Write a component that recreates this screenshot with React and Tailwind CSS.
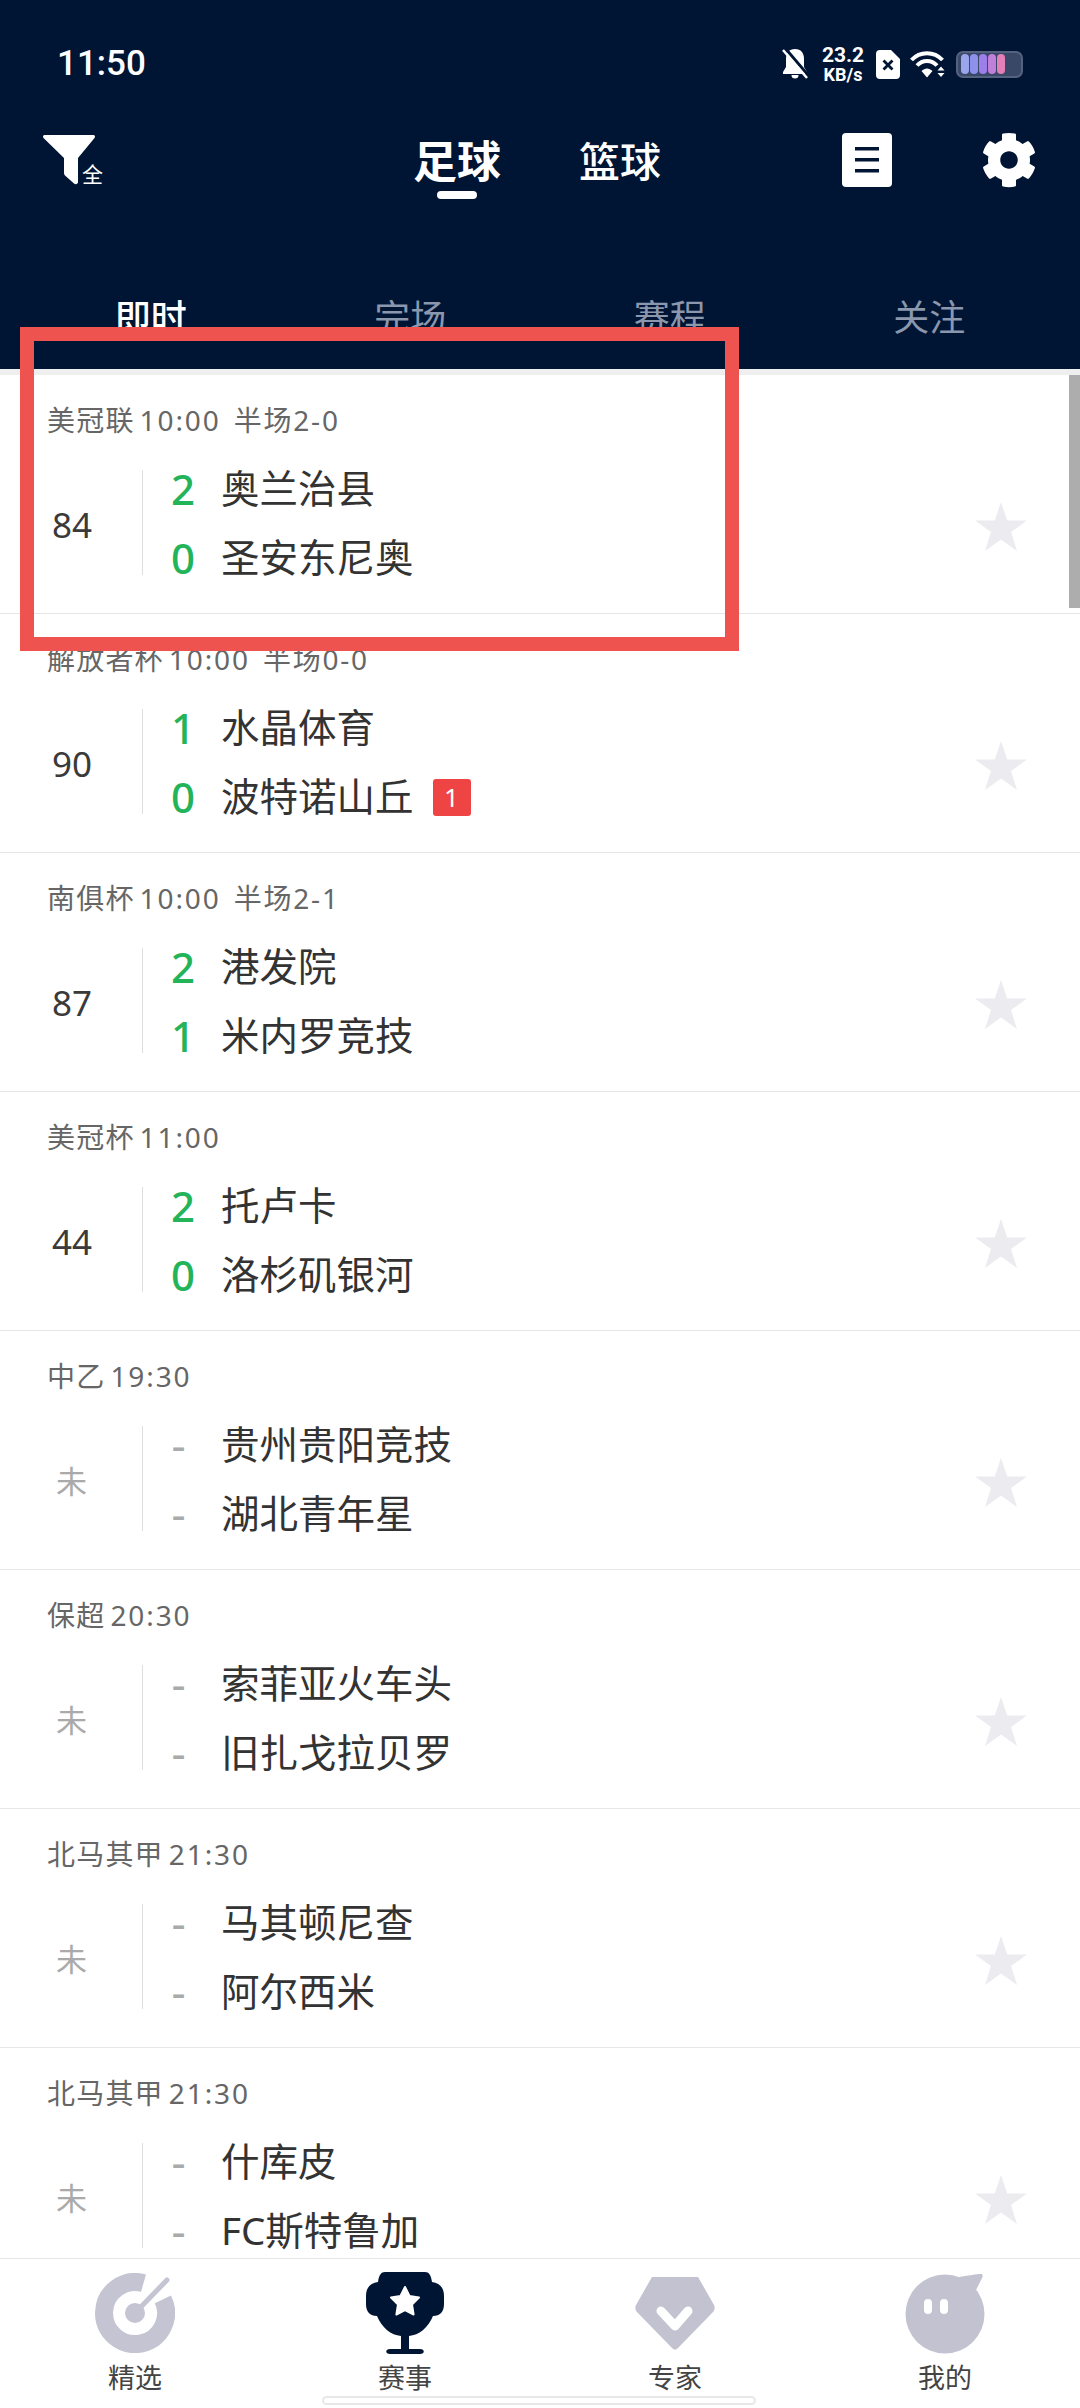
import { FaCog } from "react-icons/fa"

const matches = [
  { league: "美冠联", time: "10:00", half: "半场2-0", minute: "84", home: "奥兰治县", away: "圣安东尼奥", homeScore: "2", awayScore: "0" },
  { league: "解放者杯", time: "10:00", half: "半场0-0", minute: "90", home: "水晶体育", away: "波特诺山丘", homeScore: "1", awayScore: "0", awayCard: "1" },
  { league: "南俱杯", time: "10:00", half: "半场2-1", minute: "87", home: "港发院", away: "米内罗竞技", homeScore: "2", awayScore: "1" },
  { league: "美冠杯", time: "11:00", minute: "44", home: "托卢卡", away: "洛杉矶银河", homeScore: "2", awayScore: "0" },
  { league: "中乙", time: "19:30", home: "贵州贵阳竞技", away: "湖北青年星" },
  { league: "保超", time: "20:30", home: "索菲亚火车头", away: "旧扎戈拉贝罗" },
  { league: "北马其甲", time: "21:30", home: "马其顿尼查", away: "阿尔西米" },
  { league: "北马其甲", time: "21:30", home: "什库皮", away: "FC斯特鲁加" },
]

const BellOff = () => (
  <svg width="26" height="32" viewBox="0 0 26 32" fill="none">
    <path d="M13 1c6 0 9 4 9 10v8l3 5v2H1v-2l3-5v-8c0-6 3-10 9-10z" fill="#fff" />
    <path d="M9.500 27h7a3.500 3.500 0 0 1-7 0z" fill="#fff" />
    <path d="M3 0l23 27" stroke="#001433" strokeWidth="3" />
    <path d="M1 2l24 28" stroke="#fff" strokeWidth="2.5" />
  </svg>
)

const SimCard = () => (
  <svg width="24" height="29" viewBox="0 0 24 29">
    <path d="M4 0h11l9 9v16a4 4 0 0 1-4 4H4a4 4 0 0 1-4-4V4a4 4 0 0 1 4-4z" fill="#fff" />
    <path d="M7.5 10.5l9 9M16.500 10.500l-9 9" stroke="#001433" strokeWidth="2.800" />
  </svg>
)

const Wifi = () => (
  <svg width="36" height="28" viewBox="0 0 36 28" fill="none">
    <path d="M1.500 10c8.500-9 22.500-9 31 0" stroke="#fff" strokeWidth="4" />
    <path d="M7 15.500c5.500-6 14.500-6 20 0" stroke="#fff" strokeWidth="4" />
    <path d="M11.500 21c3.500-3.500 7.500-3.500 11 0L17 27.500z" fill="#fff" />
    <path d="M27.500 20.500l3.500-4 3.500 4zM27.500 23l3.500 4 3.500-4z" fill="#fff" />
  </svg>
)

const Battery = () => (
  <div className="flex h-[27px] w-[67px] items-center gap-[1px] rounded-[7px] border-2 border-[#55627f] bg-[#3a4868] pl-[3px]">
    <span className="h-[20px] w-[8px] rounded-full bg-[#9aa5ee]" />
    <span className="h-[20px] w-[8px] rounded-full bg-[#8f8fec]" />
    <span className="h-[20px] w-[8px] rounded-full bg-[#9c7fe8]" />
    <span className="h-[20px] w-[8px] rounded-full bg-[#c07fd8]" />
    <span className="h-[20px] w-[8px] rounded-full bg-[#e47fb8]" />
  </div>
)

const FilterIcon = () => (
  <svg width="52" height="50" viewBox="0 0 52 50">
    <path d="M2 0h48c2 0 2.500 1.500 1.500 3L35 23v24c0 2-2.500 3-4 1.500l-9-8c-.6-.6-1-1.500-1-2.500V23L.500 3C-.5 1.500 0 0 2 0z" fill="#fff" />
  </svg>
)

const DocIcon = () => (
  <svg width="50" height="54" viewBox="0 0 50 54">
    <rect width="50" height="54" rx="4" fill="#fff" />
    <rect x="13" y="14" width="24" height="3.500" fill="#001433" />
    <rect x="13" y="25" width="24" height="3.500" fill="#001433" />
    <rect x="13" y="36" width="24" height="3.500" fill="#001433" />
  </svg>
)

const GaugeIcon = () => (
  <svg width="80" height="80" viewBox="0 0 80 80" fill="none">
    <path d="M67.900 26.400A31 31 0 1 1 48.500 10.200" stroke="#c4c4d2" strokeWidth="18" />
    <circle cx="40" cy="40" r="10" fill="#c4c4d2" />
    <path d="M40 40L72 7" stroke="#c4c4d2" strokeWidth="5" strokeLinecap="round" />
  </svg>
)

const TrophyIcon = () => (
  <svg width="80" height="82" viewBox="0 0 80 82">
    <path d="M20 0h40c4 0 6 3 7 10 8 1 12 6 12 14v8c0 8-4 12-11 12-5 12-14 19-24 20v13h11c5 0 5 5 0 5H25c-5 0-5-5 0-5h11V64c-10-1-19-8-24-20-7 0-11-4-11-12v-8c0-8 4-13 12-14 1-7 3-10 7-10z" fill="#001433" />
    <path d="M40 15l4.500 9 9.500 1.500-7 7 1.600 10L40 38l-8.600 4.500 1.600-10-7-7 9.500-1.500z" fill="#fff" stroke="#fff" strokeWidth="2" strokeLinejoin="round" />
  </svg>
)

const ExpertIcon = () => (
  <svg width="80" height="80" viewBox="0 0 80 80">
    <path d="M17 4h46l16 28c1 2 1 5-1 7L43 75c-2 2-4 2-6 0L2 39c-2-2-2-5-1-7z" fill="#c2c2d0" />
    <path d="M26 38l14 15 13-15" fill="none" stroke="#fff" strokeWidth="9" strokeLinecap="round" strokeLinejoin="round" />
  </svg>
)

const MineIcon = () => (
  <svg width="80" height="82" viewBox="0 0 80 82">
    <circle cx="40" cy="42" r="39.500" fill="#c2c2d0" />
    <path d="M54 5c8-1 16-3 22-3 2 0 2 2 1 4l-7 14z" fill="#c2c2d0" />
    <rect x="19" y="27" width="8" height="15" rx="4" fill="#fff" />
    <rect x="35" y="27" width="8" height="15" rx="4" fill="#fff" />
  </svg>
)

const Star = () => (
  <svg width="52" height="50" viewBox="0 0 52 50">
    <path d="M26 0l6.200 18.500H52L36 30l6 19-16-11.500L10 49l6-19L0 18.500h19.800z" fill="#ebebf0" />
  </svg>
)

const MatchRow = ({ match }) => {
  const started = Boolean(match.minute)
  return (
    <div className="flex h-[239px] shrink-0 flex-col border-b border-[#e6e6e6] pl-[47px]">
      <div className="mt-[26px] flex h-[38px] items-center text-[28px] leading-none tracking-[1.2px] text-[#666]">
        <span>{match.league}</span>
        <span className="ml-[5px] tracking-[1.9px]">{match.time}</span>
        {match.half && <span className="ml-[13px] tracking-[1.8px]">{match.half}</span>}
      </div>
      <div className="mt-[31px] flex h-[105px] items-center">
        <div className={`w-[95px] pt-[6px] ${started ? "pl-[5px] text-[35px] text-[#3a3a3a]" : "pl-[9px] text-[31px] text-[#aaa]"}`}>
          {started ? match.minute : "未"}
        </div>
        <div className="h-[105px] w-[1px] bg-[#dedede]" />
        <div className="ml-[21px] flex flex-col gap-[13px]">
          <TeamLine name={match.home} score={match.homeScore} />
          <TeamLine name={match.away} score={match.awayScore} card={match.awayCard} />
        </div>
        <div className="mr-[53px] ml-auto pt-[9px]">
          <Star />
        </div>
      </div>
    </div>
  )
}

const TeamLine = ({ name, score, card }) => (
  <div className="flex h-[56px] items-center">
    <span className={`w-[38px] text-center leading-none ${score ? "pt-[1px] text-[42px] font-medium text-[#23b359]" : "pr-[9px] text-[44px] text-[#aaa]"}`}>
      {score || "-"}
    </span>
    <span className="ml-[19px] text-[38.5px] leading-none text-[#333]">{name}</span>
    {card && (
      <span className="mt-[3px] ml-[19px] flex h-[37px] w-[38px] items-center justify-center rounded-[3px] bg-[#ee4444] text-[26px] text-white">
        {card}
      </span>
    )}
  </div>
)

const NavItem = ({ icon, label }) => (
  <div className="flex flex-col items-center">
    <div className="flex h-[82px] items-center justify-center">{icon}</div>
    <span className="mt-[6px] text-[27px] leading-[36px] text-[#444]">{label}</span>
  </div>
)

export default function App() {
  return (
    <div className="relative flex h-[2408px] w-[1080px] flex-col overflow-hidden bg-white font-['Noto_Sans','Noto_Sans_CJK_SC',sans-serif]">
      {/* Header */}
      <div className="h-[369px] shrink-0 bg-[#001433] text-white">
        <div className="flex h-[112px] items-center pt-[16px] pr-[57px] pl-[57px]">
          <span className="font-['Roboto'] text-[35px] font-medium">11:50</span>
          <div className="ml-auto flex items-center">
            <BellOff />
            <div className="ml-[13px] flex w-[44px] flex-col items-center font-['Roboto'] font-bold leading-none">
              <span className="text-[21px]">23.2</span>
              <span className="text-[18px]">KB/s</span>
            </div>
            <div className="ml-[11px]"><SimCard /></div>
            <div className="ml-[10px]"><Wifi /></div>
            <div className="ml-[10px]"><Battery /></div>
          </div>
        </div>
        <div className="relative mt-[2px] flex h-[92px] items-center">
          <div className="ml-[43px] flex items-end">
            <FilterIcon />
            <span className="-ml-[13px] text-[21px] leading-none">全</span>
          </div>
          <div className="mt-[12px] ml-[310px] flex flex-col items-center">
            <span className="text-[44px] leading-[56px] font-bold">足球</span>
            <span className="mt-[2px] h-[8px] w-[40px] rounded-full bg-white" />
          </div>
          <span className="mt-[2px] ml-[78px] text-[41px] leading-[56px] font-medium">篮球</span>
          <div className="mr-[43px] ml-auto flex items-center gap-[89px]">
            <DocIcon />
            <FaCog className="h-[56px] w-[56px] text-white" />
          </div>
        </div>
        <div className="mt-[88px] grid grid-cols-4 px-[21px] text-center text-[36px] leading-[48px] text-[#8a97ad]">
          <span className="font-medium text-white">即时</span>
          <span>完场</span>
          <span>赛程</span>
          <span>关注</span>
        </div>
      </div>

      {/* Match list */}
      <div className="relative min-h-0 flex-1 overflow-hidden border-t-[6px] border-[#efefef]">
        <div className="flex flex-col">
          {matches.map((match, i) => (
            <MatchRow key={i} match={match} />
          ))}
        </div>
        <div className="absolute top-0 right-0 h-[233px] w-[11px] bg-[#adadad]" />
      </div>

      {/* Bottom navigation */}
      <div className="grid h-[150px] shrink-0 grid-cols-4 border-t border-[#e6e6e6] bg-white pt-[13px]">
        <NavItem icon={<GaugeIcon />} label="精选" />
        <NavItem icon={<TrophyIcon />} label="赛事" />
        <NavItem icon={<ExpertIcon />} label="专家" />
        <NavItem icon={<MineIcon />} label="我的" />
      </div>
      <div className="absolute bottom-[3px] left-[322px] h-[9px] w-[434px] rounded-full border-2 border-[#e8e8e8] bg-white" />

      {/* Highlight frame over the first row */}
      <div className="pointer-events-none absolute top-[327px] left-[20px] h-[324px] w-[719px] border-[14px] border-[#ef5350]" />
    </div>
  )
}
